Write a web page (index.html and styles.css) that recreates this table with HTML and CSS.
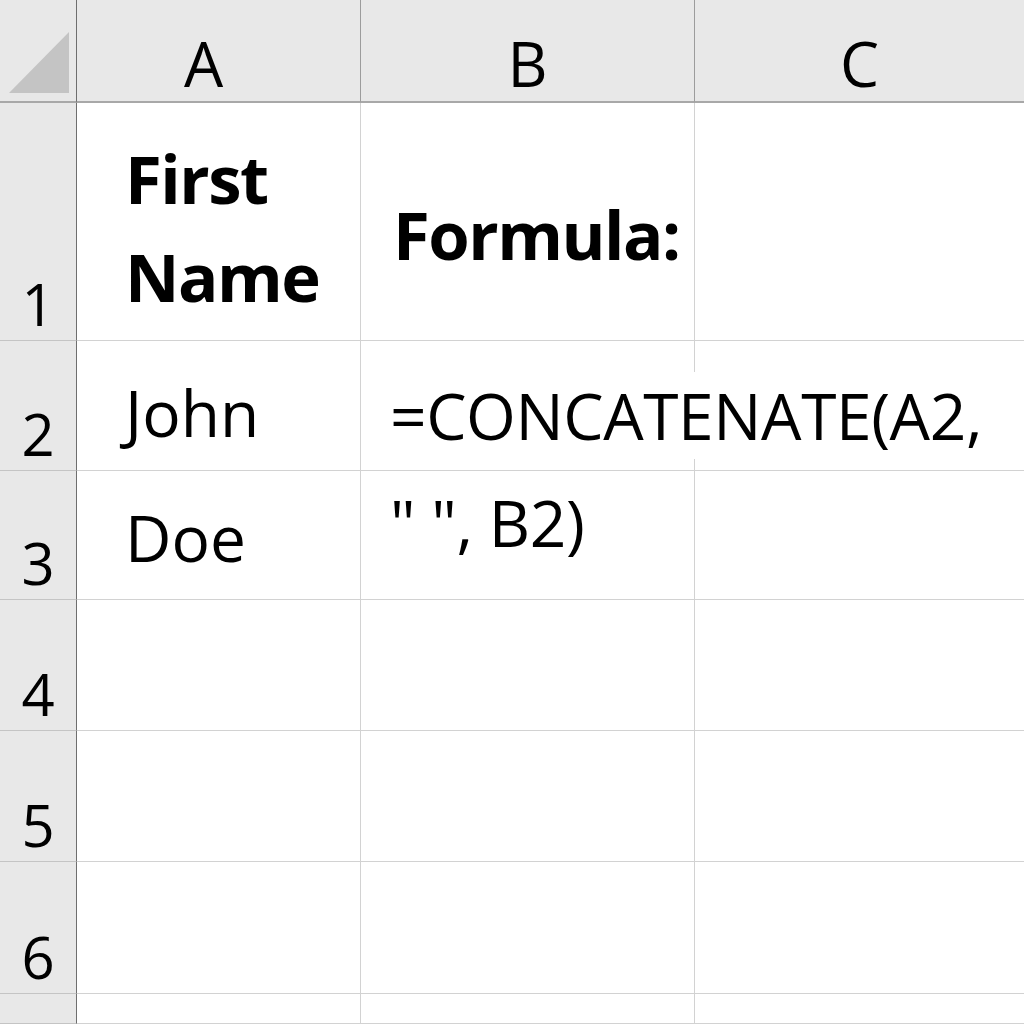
FILE: index.html
```html
<!DOCTYPE html>
<html lang="en">
<head>
  <meta charset="UTF-8">
  <title>Sheet</title>
  <link rel="stylesheet" href="styles.css">
</head>
<body>
  <div class="sheet">
    <!-- column headers -->
    <div class="corner">
      <svg width="77" height="102" viewBox="0 0 77 102"><polygon points="9,93 69,93 69,32" fill="#c4c4c4"/></svg>
    </div>
    <div class="col-head col-head-a">A</div>
    <div class="col-head">B</div>
    <div class="col-head last">C</div>

    <!-- row 1 -->
    <div class="row-head">1</div>
    <div class="cell col-a title first-name">First Name</div>
    <div class="cell col-b title formula-label">Formula:</div>
    <div class="cell"></div>

    <!-- row 2 -->
    <div class="row-head">2</div>
    <div class="cell col-a john">John</div>
    <div class="cell col-b formula"><div><span class="spill">=CONCATENATE(A2,</span><br>" ", B2)</div></div>
    <div class="cell"></div>

    <!-- row 3 -->
    <div class="row-head">3</div>
    <div class="cell col-a doe">Doe</div>
    <div class="cell"></div>
    <div class="cell"></div>

    <div class="row-head">4</div>
    <div class="cell"></div>
    <div class="cell"></div>
    <div class="cell"></div>

    <div class="row-head">5</div>
    <div class="cell"></div>
    <div class="cell"></div>
    <div class="cell"></div>

    <div class="row-head">6</div>
    <div class="cell"></div>
    <div class="cell"></div>
    <div class="cell"></div>

    <div class="row-head"></div>
    <div class="cell"></div>
    <div class="cell"></div>
    <div class="cell"></div>
  </div>
</body>
</html>
```

FILE: styles.css
```css
body {
  margin: 0;
  background: #fff;
  font-family: 'Open Sans', 'Noto Sans', sans-serif;
  color: #000;
  overflow: hidden;
  height: 1024px;
}
.sheet {
  display: grid;
  grid-template-columns: 77px 284px 334px 1fr;
  grid-template-rows: 103px 238px 130px 129px 131px 131px 132px 1fr;
  height: 1024px;
  background: #fff;
}
.corner {
  background: #e8e8e8;
  border-right: 1px solid #6e6e6e;
  border-bottom: 2px solid #a8a8a8;
  box-sizing: border-box;
}
.corner svg {
  display: block;
}
.col-head {
  background: #e8e8e8;
  border-right: 1px solid #9c9c9c;
  border-bottom: 2px solid #a8a8a8;
  box-sizing: border-box;
  display: flex;
  align-items: flex-end;
  justify-content: center;
  font-size: 62px;
  line-height: 1;
  padding-bottom: 7px;
}
.col-head-a {
  padding-right: 30px;
}
.col-head.last {
  border-right: none;
}
.row-head {
  background: #e8e8e8;
  border-right: 1px solid #6e6e6e;
  border-bottom: 1px solid #c4c4c4;
  box-sizing: border-box;
  display: flex;
  align-items: flex-end;
  justify-content: center;
  font-size: 58px;
  line-height: 1;
  padding-bottom: 7px;
}
.cell {
  border-right: 1px solid #d2d2d2;
  border-bottom: 1px solid #d2d2d2;
  box-sizing: border-box;
  display: flex;
  align-items: flex-end;
  font-size: 64px;
  line-height: 1;
  min-width: 0;
}
.cell:nth-child(4n) {
  border-right: none;
}
.col-a {
  padding-left: 48px;
}
.col-b {
  padding-left: 29px;
}
.title {
  font-weight: 700;
  font-size: 67px;
  letter-spacing: -1.5px;
  line-height: 98px;
}
.first-name {
  padding-bottom: 15px;
}
.formula-label {
  padding-left: 32px;
  padding-bottom: 57px;
}
.john {
  padding-bottom: 25px;
}
.doe {
  padding-bottom: 29px;
}
.formula {
  align-items: flex-start;
  line-height: 107px;
  letter-spacing: -0.4px;
  padding-top: 21px;
  white-space: nowrap;
  overflow: visible;
}
.spill {
  background: #fff;
  line-height: 1;
}
```
